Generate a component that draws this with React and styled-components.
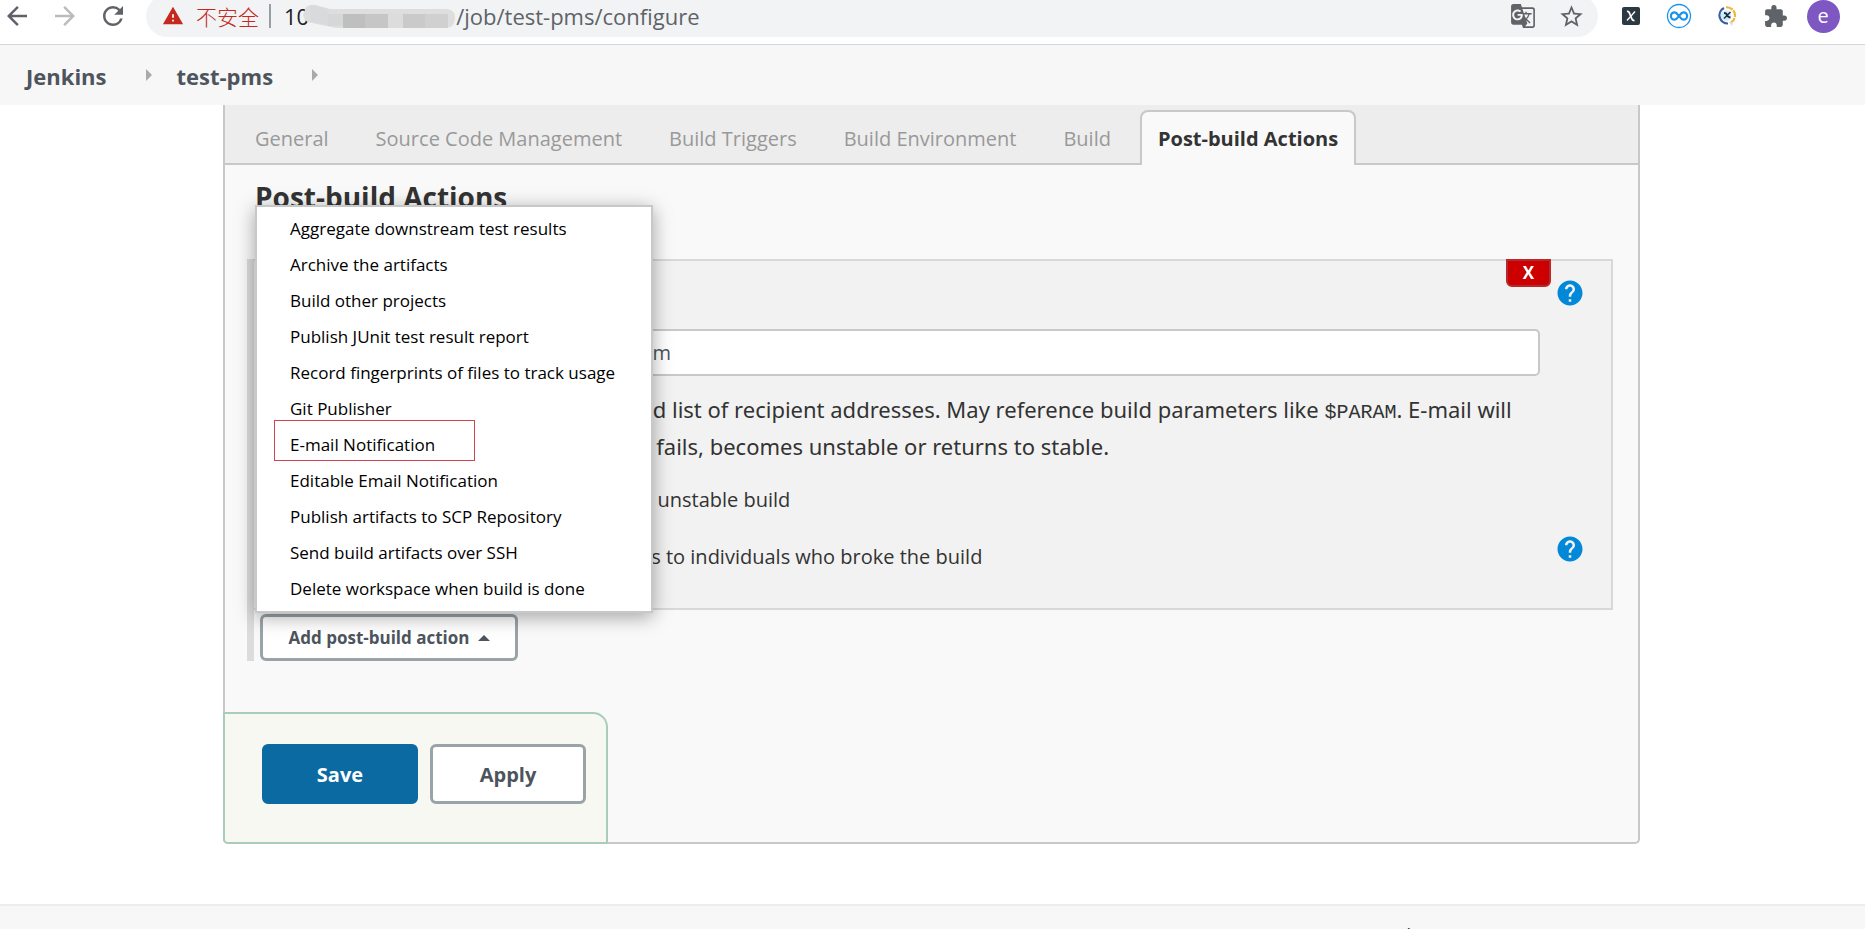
import React from 'react';
import styled, {createGlobalStyle} from 'styled-components';
import {
  MdArrowBack,
  MdArrowForward,
  MdExtension,
  MdGTranslate,
  MdHelp,
  MdRefresh,
  MdStarBorder,
  MdWarning
} from 'react-icons/md';

const colors = {
  text: '#333',
  button: '#4d545d',
  chrome: '#5f6368',
  danger: '#c5281c',
  border: '#c8c8c8',
  panel: '#f9f9f9',
  bar: '#f7f7f7',
  help: '#0288d9'
};

const GlobalStyle = createGlobalStyle`
  * {
    box-sizing: border-box;
  }

  body {
    margin: 0;
    background: #fff;
    color: ${colors.text};
    font-family: 'Open Sans', 'Noto Sans', 'Noto Sans CJK SC', sans-serif;
    font-size: 20px;
  }

  button, input {
    font-family: inherit;
  }
`;

const StyledPage = styled.div`
  height: 100vh;
  overflow: hidden;
`;

/* browser toolbar */

const StyledToolbar = styled.div`
  display: flex;
  align-items: center;
  height: 45px;
  padding: 0 18px 12px 5px;
  overflow: hidden;
  border-bottom: 1px solid #d5d7da;
  background: #fff;
`;

const StyledNav = styled.div`
  display: flex;
  gap: 24px;
  margin-right: 21px;
`;

const StyledIconButton = styled.button`
  display: flex;
  align-items: center;
  justify-content: center;
  flex: none;
  width: ${({$width}) => $width || 48}px;
  height: 32px;
  padding: 0;
  border: 0;
  background: none;
  color: ${({$muted}) => $muted ? '#bbbcbe' : colors.chrome};

  svg {
    flex: none;
  }
`;

const StyledAddress = styled.div`
  display: flex;
  align-items: center;
  flex: 1;
  height: 42px;
  margin-right: 9px;
  padding: 0 3px 0 16px;
  border-radius: 21px;
  background: #f1f3f4;
  color: ${colors.chrome};
  font-size: 22px;
  line-height: 32px;
`;

const StyledInsecure = styled.span`
  display: flex;
  align-items: center;
  gap: 12px;
  padding-right: 10px;
  border-right: 2px solid #9a9da1;
  color: ${colors.danger};
  font-family: 'Noto Sans CJK SC', sans-serif;
  font-size: 21px;
  font-weight: 300;
  line-height: 24px;
`;

const StyledUrl = styled.span`
  display: flex;
  align-items: center;
  flex: 1;
  padding-left: 13px;
`;

const StyledHost = styled.span`
  color: #202124;
`;

const StyledMosaic = styled.svg`
  margin-left: -7px;
`;

const StyledAvatar = styled.span`
  display: flex;
  align-items: center;
  justify-content: center;
  flex: none;
  width: 33px;
  height: 33px;
  border-radius: 50%;
  background: #7e57c2;
  color: #fff;
  font-size: 20px;
  line-height: 20px;
`;

/* breadcrumbs */

const StyledBreadcrumbs = styled.nav`
  display: flex;
  align-items: center;
  height: 60px;
  padding: 1px 26px 0;
  background: ${colors.bar};
`;

const StyledCrumb = styled.a`
  color: #4d545d;
  font-size: 22px;
  font-weight: 700;
  text-decoration: none;
`;

const StyledCrumbArrow = styled.span`
  margin: 0 25px 2px 39px;
  border: solid transparent;
  border-width: 6px 0 6px 6px;
  border-left-color: #aaa;
`;

/* configuration panel */

const StyledPanel = styled.main`
  margin: 0 225px 60px 223px;
  border: 2px solid ${colors.border};
  border-top: 0;
  border-radius: 0 0 5px 5px;
  background: ${colors.panel};
`;

const StyledTabs = styled.div`
  display: flex;
  gap: 11px;
  padding: 5px 12px 0;
  border-bottom: 2px solid ${colors.border};
  background: #ededed;
`;

const StyledTab = styled.button`
  height: 55px;
  margin-bottom: -2px;
  padding: 0 16px;
  border: 2px solid ${({$active}) => $active ? colors.border : 'transparent'};
  border-bottom: 0;
  border-radius: 8px 8px 0 0;
  background: ${({$active}) => $active ? colors.panel : 'none'};
  color: ${({$active}) => $active ? colors.text : '#999'};
  font-size: 20px;
  font-weight: ${({$active}) => $active ? 700 : 400};
  white-space: nowrap;
`;

const StyledBody = styled.div`
  padding: 12px 25px 51px 22px;
`;

const StyledHeading = styled.h2`
  margin: 0 0 42px;
  padding-left: 8px;
  font-size: 28px;
  line-height: 40px;
`;

const StyledRepeatable = styled.div`
  border-left: 7px solid #dcdcdc;
`;

const StyledStep = styled.section`
  position: relative;
  margin-bottom: 4px;
  padding: 0 11px 23px 20px;
  border: 2px solid #d8d8d8;
  border-left: 0;
  background: #f2f2f2;
`;

const StyledRemove = styled.button`
  position: absolute;
  top: -2px;
  right: 60px;
  width: 45px;
  height: 28px;
  padding: 0;
  border: 2px solid #b52a2a;
  border-radius: 0 0 6px 6px;
  background: #c00;
  color: #fff;
  font-size: 17px;
  font-weight: 700;
  line-height: 24px;
`;

const StyledRow = styled.div`
  display: grid;
  grid-template-columns: 162px 1fr 60px;
  align-items: center;
`;

const StyledTitleRow = styled(StyledRow)`
  height: 68px;
  padding-top: 11px;
`;

const StyledCheckRow = styled(StyledRow)`
  height: 57px;
`;

const StyledHelpButton = styled.button`
  display: flex;
  grid-column: 3;
  align-self: start;
  justify-self: center;
  margin-top: 6px;
  padding: 0;
  border: 0;
  background: none;
  color: ${colors.help};
`;

const StyledInput = styled.input`
  grid-column: 2;
  width: 100%;
  height: 47px;
  padding: 0 8px;
  border: 2px solid ${colors.border};
  border-radius: 5px;
  background: #fff;
  color: #4d545d;
  font-size: 20px;
`;

const StyledHint = styled.p`
  grid-column: 2;
  margin: 15px 20px 6px 0;
  font-family: 'Noto Sans', 'Open Sans', sans-serif;
  font-size: 22px;
  line-height: 37px;
`;

const StyledCode = styled.code`
  font-family: 'Liberation Mono', monospace;
  font-size: 20px;
  line-height: 20px;
`;

const StyledCheckbox = styled.label`
  display: flex;
  grid-column: 2;
  align-items: center;
  gap: 6px;

  input {
    margin: 0;
  }
`;

const StyledDropdown = styled.div`
  position: relative;
  width: 258px;
  margin-left: 6px;
`;

const StyledButton = styled.button`
  display: flex;
  align-items: center;
  justify-content: center;
  gap: 8px;
  width: ${({$large}) => $large ? '156px' : '100%'};
  height: ${({$large}) => $large ? 60 : 47}px;
  padding: 0;
  border: 3px solid ${({$primary}) => $primary ? '#0b6aa2' : '#9aa3a8'};
  border-radius: 6px;
  background: ${({$primary}) => $primary ? '#0b6aa2' : '#fff'};
  color: ${({$primary}) => $primary ? '#fff' : colors.button};
  font-size: ${({$large}) => $large ? 20 : 17}px;
  font-weight: 700;
`;

const StyledCaret = styled.span`
  border: solid transparent;
  border-width: 0 6px 6px;
  border-bottom-color: ${colors.button};
`;

const StyledMenu = styled.ul`
  position: absolute;
  bottom: calc(100% + 1px);
  left: -5px;
  width: 398px;
  margin: 0;
  padding: 4px 0;
  border: 2px solid ${colors.border};
  background: #fff;
  box-shadow: 0 4px 18px rgba(0, 0, 0, 0.35);
  list-style: none;
`;

const StyledMenuItem = styled.li`
  position: relative;
  padding-left: 33px;
  color: #000;
  font-size: 17px;
  line-height: 36px;
`;

const StyledMenuLink = styled.a`
  color: inherit;
  text-decoration: none;
`;

const StyledMark = styled.span`
  position: absolute;
  top: -7px;
  left: 17px;
  width: 201px;
  height: 41px;
  border: 1px solid #d0434f;
`;

const StyledActions = styled.div`
  display: flex;
  gap: 12px;
  width: max-content;
  margin: 0 0 -2px -2px;
  padding: 30px 20px 38px 37px;
  border: 2px solid #aacdb9;
  border-radius: 0 15px 0 5px;
  background: #f7f8f1;
`;

const StyledFooter = styled.footer`
  height: 80px;
  padding: 16px 454px 0 0;
  border-top: 2px solid #ededed;
  background: ${colors.bar};
  font-size: 18px;
  line-height: 26px;
  text-align: right;
`;

const tabs = [
  'General',
  'Source Code Management',
  'Build Triggers',
  'Build Environment',
  'Build',
  'Post-build Actions'
];

const actions = [
  'Aggregate downstream test results',
  'Archive the artifacts',
  'Build other projects',
  'Publish JUnit test result report',
  'Record fingerprints of files to track usage',
  'Git Publisher',
  'E-mail Notification',
  'Editable Email Notification',
  'Publish artifacts to SCP Repository',
  'Send build artifacts over SSH',
  'Delete workspace when build is done'
];

const Mosaic = () => (
  <StyledMosaic width='154' height='26' viewBox='0 0 154 26'>
    <path d='M4 4 Q9 1 14 2 L28 6 H145 Q153 7 153 14 Q153 25 144 25 H34 L10 20 Q2 19 1 12 Z' fill='#dedede' />
    <path d='M8 2 L26 6 V22 L8 19 Z' fill='#d9dadb' />
    <rect x='26' y='11' width='15' height='12' fill='#d6d7d7' />
    <rect x='41' y='11' width='22' height='14' fill='#bfbfbf' />
    <rect x='63' y='11' width='23' height='14' fill='#c6c6c6' />
    <rect x='86' y='11' width='15' height='14' fill='#dcdcdc' />
    <rect x='101' y='11' width='22' height='14' fill='#cacaca' />
    <rect x='123' y='11' width='23' height='14' fill='#d0d0d0' />
  </StyledMosaic>
);

const XIcon = () => (
  <svg width='18' height='18' viewBox='0 0 18 18'>
    <rect width='18' height='18' rx='2' fill='#2b3a42' />
    <path d='M5 4.500 Q7 4 8 7.500 L9.500 11 Q10.500 14 12.500 13.300' fill='none' stroke='#fff' strokeWidth='1.800' />
    <path d='M13 4.500 L5 13.500' stroke='#fff' strokeWidth='1.300' />
  </svg>
);

const InfinityIcon = () => (
  <svg width='26' height='26' viewBox='0 0 26 26' fill='none' stroke='#1c93ea'>
    <circle cx='13' cy='13' r='11.500' fill='#fff' strokeWidth='1.300' />
    <path
      d='M13 13 C11.500 11 10.500 9.300 8.600 9.300 A3.700 3.700 0 0 0 8.600 16.700 C10.500 16.700 11.500 15 13 13 C14.500 11 15.500 9.300 17.400 9.300 A3.700 3.700 0 0 1 17.400 16.700 C15.500 16.700 14.500 15 13 13 Z'
      strokeWidth='2.200'
    />
  </svg>
);

const RingIcon = () => (
  <svg width='22' height='22' viewBox='0 0 22 22' fill='none'>
    <path d='M8 3 A8.200 8.200 0 0 0 12 18.500' stroke='#3c5ba0' strokeWidth='2.200' />
    <path d='M10 2.300 A8.200 8.200 0 0 1 15 17.500' stroke='#efb63c' strokeWidth='2.200' strokeDasharray='7 1' />
    <path d='M13 17 L16 21 L17 17 Z' fill='#d7d9de' />
    <circle cx='10' cy='10.500' r='5.200' fill='#cfeafa' />
    <path d='M8 8 Q10.500 8 11 10 T14.500 12.500' stroke='#1d2940' strokeWidth='1.900' />
    <path d='M14.500 7 L8 13.500' stroke='#1d2940' strokeWidth='1.400' />
  </svg>
);

const Toolbar = () => (
  <StyledToolbar>
    <StyledNav>
      <StyledIconButton $width={24} aria-label='Back'><MdArrowBack size={30} /></StyledIconButton>
      <StyledIconButton $width={24} aria-label='Forward' $muted><MdArrowForward size={30} /></StyledIconButton>
      <StyledIconButton $width={24} aria-label='Reload'><MdRefresh size={30} /></StyledIconButton>
    </StyledNav>
    <StyledAddress>
      <StyledInsecure><MdWarning size={22} />不安全</StyledInsecure>
      <StyledUrl>
        <StyledHost>10</StyledHost>
        <Mosaic />
        /job/test-pms/configure
      </StyledUrl>
      <StyledIconButton aria-label='Translate'><MdGTranslate size={26} /></StyledIconButton>
      <StyledIconButton aria-label='Bookmark'><MdStarBorder size={27} /></StyledIconButton>
    </StyledAddress>
    <StyledIconButton aria-label='X'><XIcon /></StyledIconButton>
    <StyledIconButton aria-label='Infinity'><InfinityIcon /></StyledIconButton>
    <StyledIconButton aria-label='Ring'><RingIcon /></StyledIconButton>
    <StyledIconButton aria-label='Extensions'><MdExtension size={25} /></StyledIconButton>
    <StyledIconButton aria-label='Profile'><StyledAvatar>e</StyledAvatar></StyledIconButton>
  </StyledToolbar>
);

const Help = () => (
  <StyledHelpButton aria-label='Help'>
    <MdHelp size={30} />
  </StyledHelpButton>
);

const EmailStep = () => (
  <StyledStep>
    <StyledRemove>X</StyledRemove>
    <StyledTitleRow>
      <Help />
    </StyledTitleRow>
    <StyledRow>
      <StyledInput aria-label='Recipients' defaultValue='test-pms@example.com' />
    </StyledRow>
    <StyledRow>
      <StyledHint>
        Whitespace-separated list of recipient addresses. May reference build parameters like <StyledCode>$PARAM</StyledCode>. E-mail will be sent when a build fails, becomes unstable or returns to stable.
      </StyledHint>
    </StyledRow>
    <StyledCheckRow>
      <StyledCheckbox>
        <input type='checkbox' defaultChecked />
        Send e-mail for every unstable build
      </StyledCheckbox>
    </StyledCheckRow>
    <StyledCheckRow>
      <StyledCheckbox>
        <input type='checkbox' />
        Send separate e-mails to individuals who broke the build
      </StyledCheckbox>
      <Help />
    </StyledCheckRow>
  </StyledStep>
);

const AddAction = () => (
  <StyledDropdown>
    <StyledButton>
      Add post-build action
      <StyledCaret />
    </StyledButton>
    <StyledMenu>
      {actions.map(action => (
        <StyledMenuItem key={action}>
          <StyledMenuLink href='#'>{action}</StyledMenuLink>
          {action === 'E-mail Notification' && <StyledMark />}
        </StyledMenuItem>
      ))}
    </StyledMenu>
  </StyledDropdown>
);

const App = () => (
  <StyledPage>
    <GlobalStyle />
    <Toolbar />
    <StyledBreadcrumbs>
      <StyledCrumb href='#'>Jenkins</StyledCrumb>
      <StyledCrumbArrow />
      <StyledCrumb href='#'>test-pms</StyledCrumb>
      <StyledCrumbArrow />
    </StyledBreadcrumbs>
    <StyledPanel>
      <StyledTabs>
        {tabs.map(tab => (
          <StyledTab key={tab} $active={tab === 'Post-build Actions'}>{tab}</StyledTab>
        ))}
      </StyledTabs>
      <StyledBody>
        <StyledHeading>Post-build Actions</StyledHeading>
        <StyledRepeatable>
          <EmailStep />
          <AddAction />
        </StyledRepeatable>
      </StyledBody>
      <StyledActions>
        <StyledButton $large $primary>Save</StyledButton>
        <StyledButton $large>Apply</StyledButton>
      </StyledActions>
    </StyledPanel>
    <StyledFooter>Page generated</StyledFooter>
  </StyledPage>
);

export default App;
